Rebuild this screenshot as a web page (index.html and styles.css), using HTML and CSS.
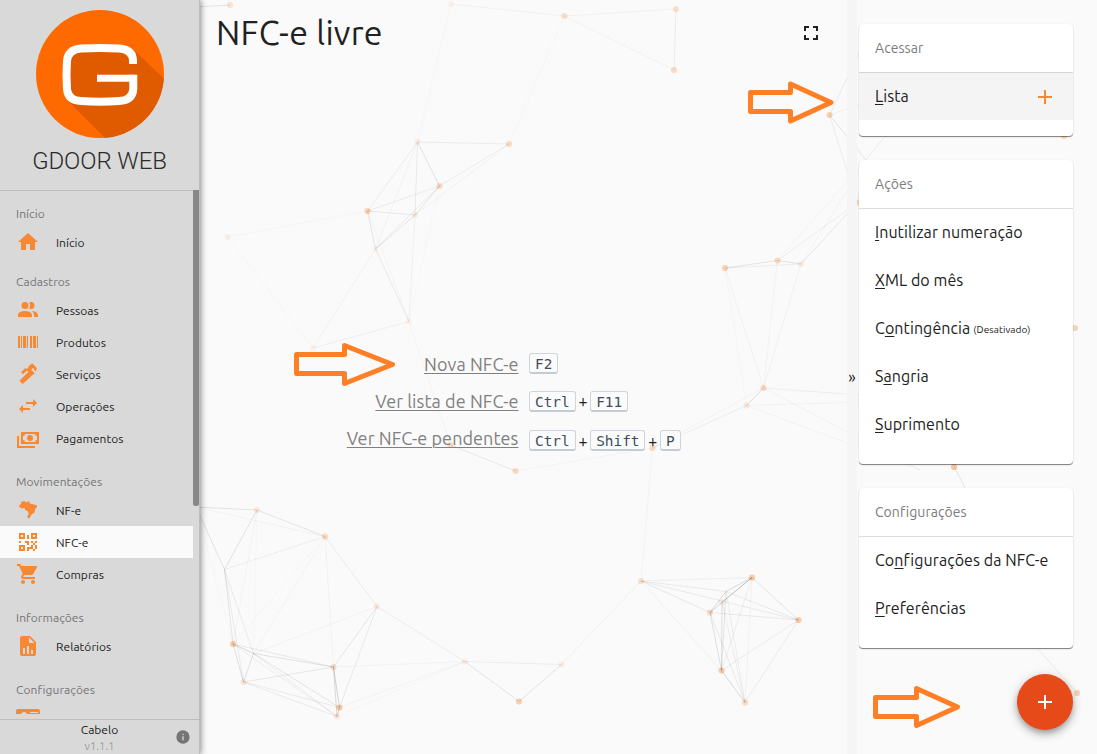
FILE: index.html
```html
<!DOCTYPE html>
<html lang="pt-BR">
<head>
<meta charset="utf-8">
<title>NFC-e livre</title>
<link rel="stylesheet" href="styles.css">
</head>
<body>
<svg class="network" viewBox="0 0 1097 754" aria-hidden="true"></svg>
<div class="app">
  <aside class="sidebar">
    <header class="brand">
      <svg class="logo" viewBox="36 10 128 128">
        <defs><clipPath id="disc"><circle cx="100" cy="74" r="64"/></clipPath></defs>
        <circle cx="100" cy="74" r="64" fill="#ff6a00"/>
        <path clip-path="url(#disc)" fill="#e05a00" d="M70 50H134L184 98V158H125L68 101Z"/>
        <path fill="none" stroke="#fff" stroke-width="8" d="M133 64V61Q133 49.500 119 48.500Q100 47.500 81 48.500Q68 49.500 67 61Q66 75 67 89Q68 100.500 81 101Q100 102.500 119 101Q132.500 100.500 133.300 89V74.800"/>
        <path fill="none" stroke="#fff" stroke-width="7" d="M97 78.300H135"/>
      </svg>
      <div class="brand-name">GDOOR WEB</div>
    </header>
    <div class="nav-wrap">
      <nav class="nav">
        <h3 class="nav-title first">Início</h3>
        <a class="nav-item"><svg viewBox="0 0 24 24"><path d="M10 20v-6h4v6h5v-8h3L12 3 2 12h3v8z"/></svg><span>Início</span></a>
        <h3 class="nav-title second">Cadastros</h3>
        <a class="nav-item"><svg viewBox="0 0 24 24"><path d="M16 17v2H2v-2s0-4 7-4 7 4 7 4m-3.500-9.500A3.500 3.500 0 1 0 9 11a3.500 3.500 0 0 0 3.500-3.500m3.440 5.500A5.320 5.320 0 0 1 18 17v2h4v-2s0-3.630-6.060-4M15 4a3.390 3.390 0 0 0-1.930.59 5 5 0 0 1 0 5.820A3.390 3.390 0 0 0 15 11a3.500 3.500 0 0 0 0-7z"/></svg><span>Pessoas</span></a>
        <a class="nav-item"><svg viewBox="0 0 24 24"><path d="M2 6h2v12H2V6m3 0h1v12H5V6m2 0h3v12H7V6m4 0h1v12h-1V6m3 0h2v12h-2V6m3 0h3v12h-3V6m4 0h1v12h-1V6z"/></svg><span>Produtos</span></a>
        <a class="nav-item"><svg viewBox="0 0 24 24"><path d="M3.500 18.700L12.300 9.900 11 8.600 6.900 12.300 5 10.300 9.500 6 10.800 7 12.600 5.300 12.300 4.200 16.300 1.300 21 6.300 19.700 9.500 18.300 8 17.300 5.800 15.200 7.800 18.900 11.600 17.400 12.200 6.700 22Z"/></svg><span>Serviços</span></a>
        <a class="nav-item"><svg viewBox="0 0 24 24"><path d="M21 9l-4-4v3H10v2h7v3M7 11l-4 4 4 4v-3h7v-2H7z"/></svg><span>Operações</span></a>
        <a class="nav-item"><svg viewBox="0 0 24 24"><path d="M5,6H23V18H5V6M14,9A3,3 0 0,1 17,12A3,3 0 0,1 14,15A3,3 0 0,1 11,12A3,3 0 0,1 14,9M9,8A2,2 0 0,1 7,10V14A2,2 0 0,1 9,16H19A2,2 0 0,1 21,14V10A2,2 0 0,1 19,8H9M1,10H3V20H19V22H1V10Z"/></svg><span>Pagamentos</span></a>
        <h3 class="nav-title">Movimentações</h3>
        <a class="nav-item"><svg viewBox="0 0 24 24"><path d="M8.500 3L9.500 4.200 13.200 3.200 14 5.500 20.800 7.300 21 9 19.200 11 18.500 14.500 15.500 16.500 13.200 20.800 11 18.500 12.700 16.300 12 13.500 9 11.800 8.500 10 5.500 10.500 3 8.500 3.300 7 5 6.200 5.200 3.800Z"/></svg><span>NF-e</span></a>
        <a class="nav-item active"><svg viewBox="0 0 24 24"><path d="M3,11H5V13H3V11M11,5H13V9H11V5M9,11H13V15H11V13H9V11M15,11H17V13H19V11H21V13H19V15H21V19H19V21H17V19H13V21H11V17H15V15H17V13H15V11M19,19V15H17V19H19M15,3H21V9H15V3M17,5V7H19V5H17M3,3H9V9H3V3M5,5V7H7V5H5M3,15H9V21H3V15M5,17V19H7V17H5Z"/></svg><span>NFC-e</span></a>
        <a class="nav-item"><svg viewBox="0 0 24 24"><path d="M7 18c-1.100 0-1.990.9-1.990 2S5.900 22 7 22s2-.9 2-2-.9-2-2-2zM1 2v2h2l3.600 7.590-1.350 2.450c-.16.28-.25.61-.25.96 0 1.100.9 2 2 2h12v-2H7.420c-.14 0-.25-.11-.25-.25l.03-.12.9-1.630h7.450c.75 0 1.410-.41 1.750-1.030l3.580-6.490A1 1 0 0 0 20 4H5.210l-.94-2H1zm16 16c-1.100 0-1.990.9-1.990 2s.89 2 1.990 2 2-.9 2-2-.9-2-2-2z"/></svg><span>Compras</span></a>
        <h3 class="nav-title">Informações</h3>
        <a class="nav-item"><svg viewBox="0 0 24 24"><path fill-rule="evenodd" d="M13 9h5.500L13 3.500V9M6 2h8l6 6v12a2 2 0 0 1-2 2H6a2 2 0 0 1-2-2V4a2 2 0 0 1 2-2m1 18h2v-6H7v6m4 0h2v-8h-2v8m4 0h2v-4h-2v4z"/></svg><span>Relatórios</span></a>
        <h3 class="nav-title">Configurações</h3>
        <a class="nav-item"><svg viewBox="0 0 24 24"><path fill-rule="evenodd" d="M2,3H22C23.050,3 24,3.950 24,5V19C24,20.050 23.050,21 22,21H2C0.950,21 0,20.050 0,19V5C0,3.950 0.950,3 2,3M14,6V7H22V6H14M8,6A3,3 0 0,0 5,9A3,3 0 0,0 8,12A3,3 0 0,0 11,9A3,3 0 0,0 8,6Z"/></svg></a>
      </nav>
      <div class="scroll-thumb"></div>
    </div>
    <footer class="side-foot">
      <div class="user">Cabelo</div>
      <div class="version">v1.1.1</div>
      <svg class="info" viewBox="0 0 24 24"><path fill-rule="evenodd" d="M12 2a10 10 0 1 0 0 20 10 10 0 0 0 0-20zm1 15h-2v-6h2v6zm0-8h-2V7h2v2z"/></svg>
    </footer>
  </aside>

  <main class="main">
    <div class="title-row">
      <h1>NFC-e livre</h1>
      <svg class="fullscreen" viewBox="0 0 24 24"><path d="M5 5h5v2H7v3H5V5m9 0h5v5h-2V7h-3V5m3 9h2v5h-5v-2h3v-3m-7 3v2H5v-5h2v3h3z"/></svg>
    </div>
    <div class="shortcuts">
      <div class="row"><a class="l1">Nova NFC-e</a><span class="keys"><kbd>F2</kbd></span></div>
      <div class="row"><a class="l2">Ver lista de NFC-e</a><span class="keys"><kbd>Ctrl</kbd><i>+</i><kbd>F11</kbd></span></div>
      <div class="row"><a class="l3">Ver NFC-e pendentes</a><span class="keys low"><kbd>Ctrl</kbd><i>+</i><kbd>Shift</kbd><i>+</i><kbd>P</kbd></span></div>
    </div>
  </main>

  <div class="collapse">»</div>

  <aside class="actions">
    <section class="card">
      <h2>Acessar</h2>
      <a class="action hover"><span><u>L</u>ista</span><svg class="plus" viewBox="0 0 24 24"><path d="M19 13h-6v6h-2v-6H5v-2h6V5h2v6h6v2z"/></svg></a>
    </section>
    <section class="card">
      <h2>Ações</h2>
      <a class="action"><span><u>I</u>nutilizar numeração</span></a>
      <a class="action"><span><u>X</u>ML do mês</span></a>
      <a class="action"><span>C<u>o</u>ntingência</span><small>(Desativado)</small></a>
      <a class="action"><span>S<u>a</u>ngria</span></a>
      <a class="action"><span><u>S</u>uprimento</span></a>
    </section>
    <section class="card">
      <h2>Configurações</h2>
      <a class="action"><span>Co<u>n</u>figurações da NFC-e</span></a>
      <a class="action"><span><u>P</u>referências</span></a>
    </section>
  </aside>
</div>
<button class="fab" aria-label="Adicionar"><svg viewBox="0 0 24 24"><path d="M19 13h-6v6h-2v-6H5v-2h6V5h2v6h6v2z"/></svg></button>
<svg class="pointers" viewBox="0 0 1097 754" aria-hidden="true">
  <path d="M750.500 92.500H790.500V84L831 102.500 790.500 121V111.500H750.500Z"/>
  <path d="M296.500 354.500H344.500V345.500L392.500 364.500 344.500 383.500V373.500H296.500Z"/>
  <path d="M875.500 697.500H916.500V688.500L957.500 707 916.500 725.500V716.500H875.500Z"/>
</svg>
<script src="network.js"></script>
</body>
</html>
```
FILE: styles.css
```css
* { box-sizing: border-box; }
body {
  margin: 0;
  width: 1097px;
  height: 754px;
  overflow: hidden;
  background: #fafafa;
  color: #212121;
  font-family: "Ubuntu", "Noto Sans", sans-serif;
  position: relative;
}
h1, h2, h3 { margin: 0; font-weight: 400; }
.network, .pointers { position: absolute; inset: 0; width: 1097px; height: 754px; pointer-events: none; }
.pointers { z-index: 5; }
.pointers path { fill: none; stroke: #ff7f27; stroke-width: 5; stroke-linejoin: round; }
.app { position: relative; display: flex; height: 754px; }

.sidebar {
  width: 200px;
  flex: none;
  display: flex;
  flex-direction: column;
  background: #d9d9d9;
  border-right: 1px solid #bdbdbd;
  box-shadow: 1px 0 6px rgba(0, 0, 0, .45);
}
.brand {
  height: 191px;
  flex: none;
  padding-top: 10px;
  border-bottom: 1px solid #bdbdbd;
  display: flex;
  flex-direction: column;
  align-items: center;
}
.logo { width: 128px; height: 128px; flex: none; margin-left: 1px; }
.brand-name { font: 300 24px/28px Roboto, sans-serif; margin-top: 9px; color: #2b2b2b; letter-spacing: -.1px; white-space: nowrap; }
.nav-wrap { position: relative; height: 528px; padding-bottom: 5px; }
.nav { height: 523px; overflow: hidden; padding-right: 6px; }
.nav-title { height: 40px; padding: 16px 0 0 16px; font-size: 12px; line-height: 24px; color: #757575; letter-spacing: .08px; }
.nav-title.first { height: 35px; padding-top: 11px; }
.nav-title.second { height: 36px; padding-top: 12px; }
.nav-item { display: flex; align-items: center; gap: 16px; height: 32px; padding-left: 16px; font-size: 12px; letter-spacing: .05px; color: #212121; }
.nav-item.active { background: #fafafa; }
.nav-item svg { width: 24px; height: 24px; fill: #f98832; flex: none; }
.nav-item span { padding-top: 1px; }
.scroll-thumb { position: absolute; right: 0; top: -1px; width: 6px; height: 316px; background: #888; border-radius: 0 0 2px 2px; }
.side-foot { position: relative; flex: 1; border-top: 1px solid #bdbdbd; text-align: center; font-size: 12px; line-height: 16px; padding-top: 2px; }
.version { color: #9e9e9e; font-size: 11px; letter-spacing: .1px; }
.info { position: absolute; right: 8px; top: 9px; width: 16px; height: 16px; fill: #757575; }

.main { width: 647px; flex: none; padding: 13px 24px 0 16px; }
.title-row { display: flex; justify-content: space-between; height: 40px; }
h1 { font-size: 34px; line-height: 38px; letter-spacing: .25px; white-space: nowrap; }
.fullscreen { width: 24px; height: 24px; fill: #212121; margin-top: 8px; }
.shortcuts { margin-top: 293px; display: flex; flex-direction: column; }
.row { display: grid; grid-template-columns: 302.500px auto; column-gap: 10.500px; height: 37.500px; align-items: start; }
.row a { justify-self: end; font-size: 18px; line-height: 36px; letter-spacing: .08px; color: #808080; text-decoration: underline; text-underline-offset: 2px; text-decoration-thickness: 1px; white-space: nowrap; }
.row .l2, .row .l3 { line-height: 34px; }
.keys { display: flex; align-items: center; padding-top: 7px; }
.keys.low { padding-top: 9px; }
kbd {
  height: 21px;
  padding: 0 5px;
  border: 1px solid #d1d5da;
  border-bottom: 2px solid #c6cbd1;
  border-radius: 3px;
  background: #fafbfc;
  color: #444d56;
  font: 14.400px/20px "DejaVu Sans Mono", monospace;
}
.keys i { width: 14.500px; text-align: center; font-style: normal; font-size: 16px; line-height: 18px; }

.collapse { width: 10px; flex: none; background: #f5f5f5; font-size: 16px; line-height: 754px; text-align: center; }
.actions { width: 240px; padding: 24px 24px 0 2px; display: flex; flex-direction: column; gap: 24px; }
.card { background: #fff; border-radius: 4px; padding-bottom: 16px; box-shadow: 0 1px 1px rgba(0, 0, 0, .5), 0 0 2px rgba(0, 0, 0, .06); }
.card h2 { height: 49px; margin-bottom: -1px; padding-left: 16px; border-bottom: 1px solid #dcdcdc; font-size: 14px; line-height: 48px; letter-spacing: .05px; color: #7c7c7c; }
.action { display: flex; align-items: center; height: 48px; padding-left: 16px; font-size: 16px; letter-spacing: .08px; white-space: nowrap; }
.action.hover { background: #f4f4f4; border-top: 1px solid #d6d6d6; }
.action.hover span { margin-top: -1px; }
.action u { text-decoration-thickness: 1px; text-underline-offset: 2px; }
.action small { font-size: 10px; margin: 2px 0 0 3px; }
.plus { width: 24px; height: 24px; fill: #f98832; margin-left: auto; margin-right: 16px; }
.fab { position: absolute; left: 1017px; top: 674px; width: 56px; height: 56px; border: 0; border-radius: 50%; padding: 16px; background: #e64a19; box-shadow: 0 3px 5px -1px rgba(0, 0, 0, .2), 0 5px 10px rgba(0, 0, 0, .2), 0 1px 12px rgba(0, 0, 0, .12); }
.fab svg { display: block; width: 24px; height: 24px; fill: #fff; }
```
FILE: network.js
```javascript
// Decorative particles: [x, y, dot opacity]
const P = [
  [230,5,.2],[180,8,0],[451,4,.08],[564.5,16,.22],[676,9,.22],[674,70,.25],
  [417.5,142,.1],[509,144,.25],[439.500,186,.27],[367.5,211,.35],[415,215,.12],[375.5,249,.07],
  [227.5,237,.1],[409,321.5,.07],[313,348,.07],
  [829.5,115,.35],[857,203,.3],[725,268,.35],[777.500,260.500,.27],[801,264,.1],
  [763.5,388,.27],[746.500,405.500,.15],[652.500,448,.27],[450.500,445,.27],[515.5,471,.27],
  [641,581,.22],[752,577.500,.4],[798.5,620,.4],[726,591.500,0],[722,602,.1],[710,612.5,.27],[721.5,670.5,.4],[745,702.500,.25],
  [561.500,664.500,.1],[519,701.500,.38],[465,661.500,.1],[377,606.500,.13],[325,536.500,.27],[257,510,.14],[224.500,569.500,0],
  [233,644,.4],[253.500,653.500,0],[243.500,682,.18],[333.500,667,.25],[339.500,707.500,.4],[337,716.500,.15],[196,507,0],
  [1075,328,.35],[954,467,.45],[1077,693,.35],[1064,136,.3],[866,160,0],[930,80,0],[1010,400,0],[980,515,0],[870,30,0],
  [930,400,0],[920,470,0],[1030,640,0]
];
// Links: [from, to, line opacity]
const L = [
  [0,1,.16],[2,3,.07],[3,4,.07],[3,5,.05],[4,5,.1],[3,7,.03],[2,6,.03],
  [6,7,.1],[6,8,.18],[6,9,.1],[6,10,.12],[6,11,.05],[7,8,.1],[7,10,.05],[8,9,.1],[8,10,.16],[8,11,.12],[9,10,.14],[9,11,.16],[10,11,.16],
  [9,12,.03],[9,13,.04],[10,13,.07],[11,13,.13],[11,14,.06],[13,14,.09],[13,23,.04],[8,13,.02],[12,14,.03],
  [15,16,.1],[15,51,.16],[15,52,.07],[15,55,.13],[16,18,.1],[16,19,.14],[16,51,.13],[18,51,.04],[19,51,.05],[51,52,.1],
  [17,18,.16],[17,19,.1],[18,19,.18],[17,20,.06],[17,21,.03],[18,20,.05],[19,20,.06],[20,21,.2],[20,22,.05],[21,22,.1],[20,56,.09],[20,57,.06],[21,56,.05],[21,57,.05],
  [22,24,.04],[23,24,.14],[22,25,.04],
  [25,26,.08],[25,28,.12],[25,27,.12],[25,30,.14],[25,31,.07],[25,33,.07],
  [26,28,.25],[26,30,.28],[26,29,.2],[26,27,.16],[26,31,.09],[26,32,.06],[28,30,.25],[28,27,.12],[28,31,.16],[28,32,.09],
  [30,27,.12],[30,31,.2],[30,32,.12],[29,31,.2],[29,32,.1],[27,31,.11],[27,32,.11],[31,32,.24],
  [33,34,.16],[33,35,.09],[34,35,.17],[35,36,.1],[35,43,.05],[35,44,.05],[35,45,.03],
  [36,43,.15],[36,44,.12],[36,41,.05],[36,37,.12],[37,38,.15],[37,39,.09],[37,43,.06],[37,41,.04],[37,40,.03],
  [38,39,.18],[38,46,.17],[46,39,.18],[37,46,.05],[38,40,.04],[38,41,.03],[46,40,.03],
  [39,40,.16],[39,41,.11],[39,42,.11],[40,41,.25],[40,42,.2],[40,43,.13],[40,45,.1],[41,42,.2],[41,43,.18],[41,44,.16],[41,45,.1],
  [42,43,.13],[42,44,.11],[42,45,.11],[43,44,.3],[43,45,.25],[44,45,.3],
  [48,54,.17],[49,58,.12]
];
const NS = 'http://www.w3.org/2000/svg';
const svg = document.querySelector('.network');
function add(tag, attrs) {
  const el = document.createElementNS(NS, tag);
  for (const k in attrs) el.setAttribute(k, attrs[k]);
  svg.appendChild(el);
}
P.forEach(([x, y, o]) => add('circle', { cx: x, cy: y, r: 3.1, fill: '#f98832', opacity: o }));
L.forEach(([a, b, o]) => add('line', { x1: P[a][0], y1: P[a][1], x2: P[b][0], y2: P[b][1], stroke: '#000', 'stroke-opacity': o * .5 + .01 }));
```
